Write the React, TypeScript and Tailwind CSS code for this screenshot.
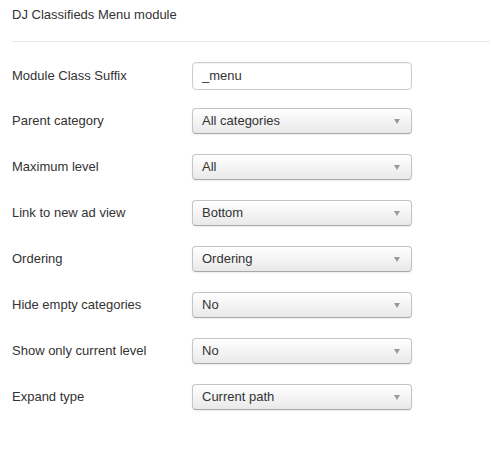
const rows: { label: string; value: string }[] = [
  { label: "Parent category", value: "All categories" },
  { label: "Maximum level", value: "All" },
  { label: "Link to new ad view", value: "Bottom" },
  { label: "Ordering", value: "Ordering" },
  { label: "Hide empty categories", value: "No" },
  { label: "Show only current level", value: "No" },
  { label: "Expand type", value: "Current path" },
];

function FakeSelect({ value }: { value: string }) {
  return (
    <div className="w-[220px] h-[26px] flex items-center justify-between pl-[9px] pr-[11px] rounded-[4px] border border-[#c4c4c4] border-b-[#a8a8a8] bg-gradient-to-b from-white to-[#e9e9e9] shadow-[0_1px_2px_rgba(0,0,0,0.08)]">
      <span>{value}</span>
      <span className="w-0 h-0 border-l-[3.5px] border-r-[3.5px] border-t-[5px] border-l-transparent border-r-transparent border-t-[#999]" />
    </div>
  );
}

export default function App() {
  return (
    <div className="w-[492px] h-[452px] bg-white pl-3 pr-[2px] text-[13px] text-[#333] font-['Liberation_Sans',Arial,sans-serif]">
      <div className="pt-[6px] h-[42px] border-b border-[#e8e8e8]">
        <h3 className="leading-[18px]">DJ Classifieds Menu module</h3>
      </div>
      <div className="pt-[20px]">
        <div className="flex items-center h-[28px] mb-[18px]">
          <label className="w-[180px]">Module Class Suffix</label>
          <div className="w-[220px] h-[28px] flex items-center pl-[9px] rounded-[4px] border border-[#ccc] bg-white shadow-[inset_0_1px_1px_rgba(0,0,0,0.05)]">
            _menu
          </div>
        </div>
        {rows.map((r) => (
          <div key={r.label} className="flex items-center h-[26px] mb-[20px]">
            <label className="w-[180px]">{r.label}</label>
            <FakeSelect value={r.value} />
          </div>
        ))}
      </div>
    </div>
  );
}
